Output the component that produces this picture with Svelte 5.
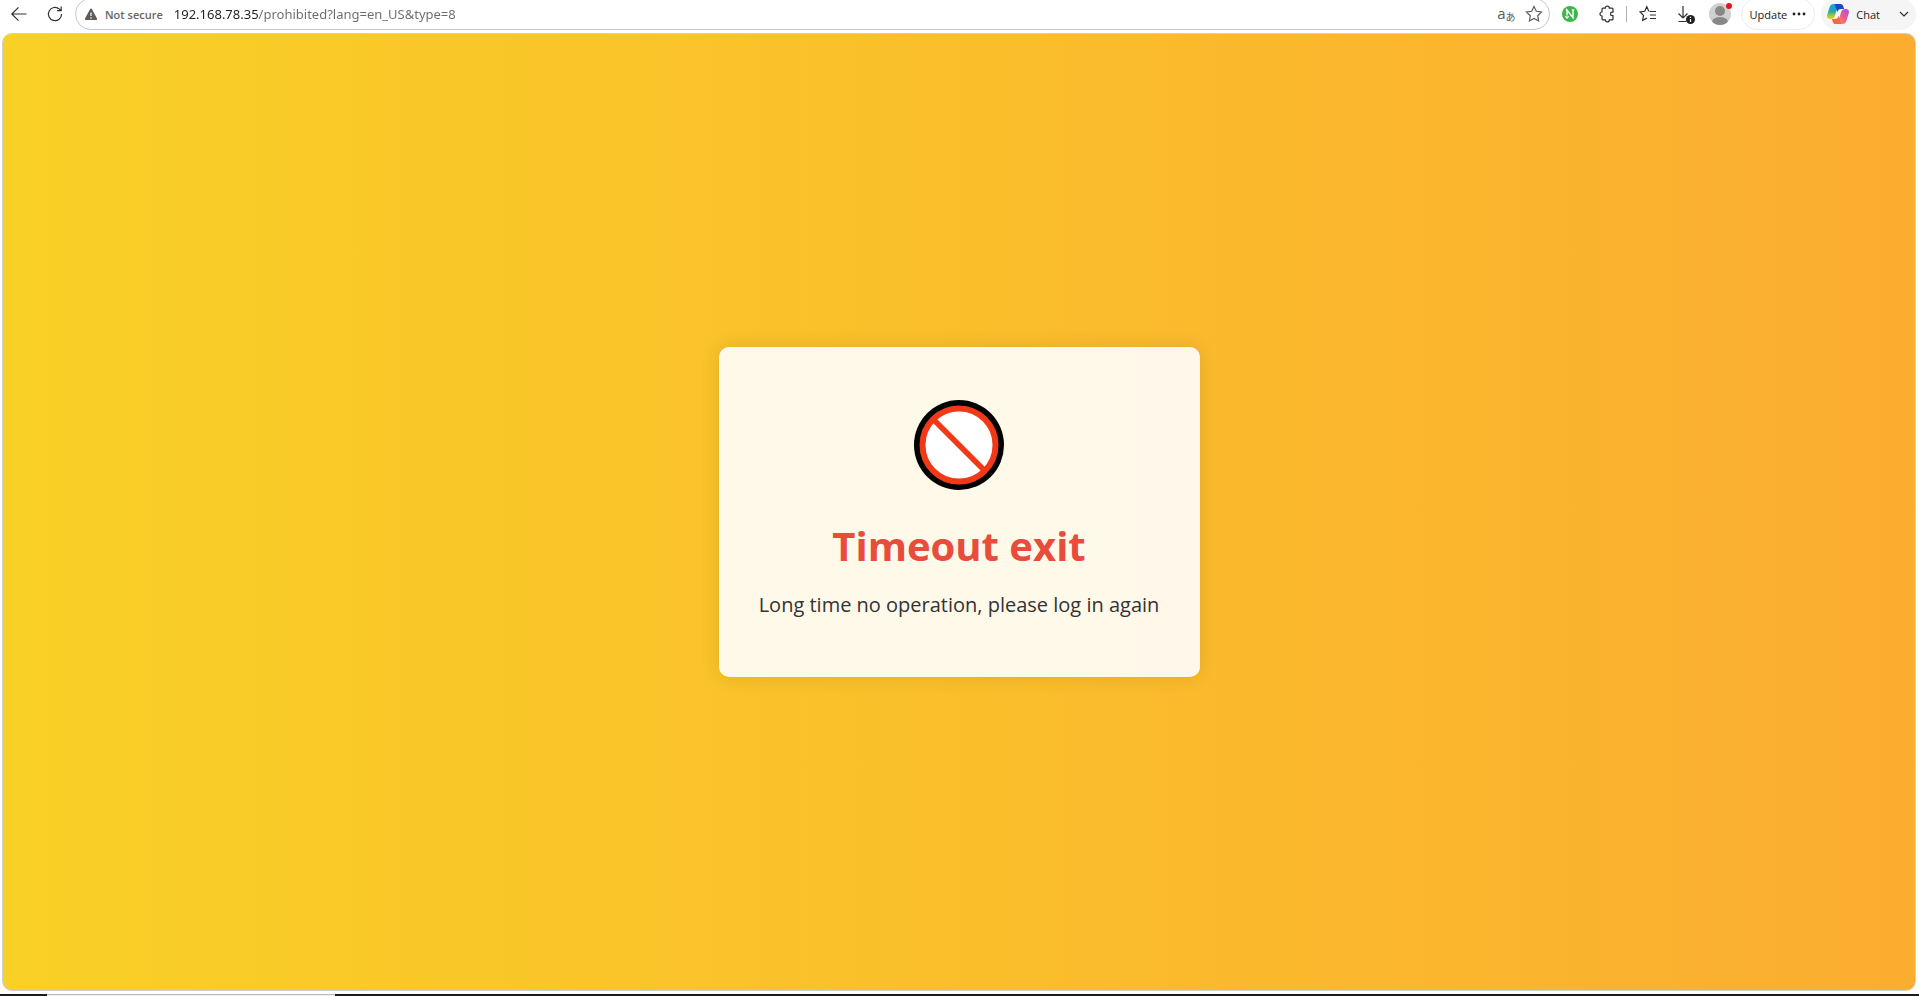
<script>
	let address = $state('192.168.78.35/prohibited?lang=en_US&type=8');

	const title = 'Timeout exit';
	const message = 'Long time no operation, please log in again';
</script>

<div class="browser">
	<header class="toolbar">
		<nav class="history">
			<button aria-label="Back">
				<svg width="18" height="18" viewBox="0 0 18 18">
					<path d="M16.500 9H1.800M8.500 2.300 1.800 9l6.700 6.700" />
				</svg>
			</button>
			<button aria-label="Refresh">
				<svg width="18" height="18" viewBox="0 0 18 18">
					<path d="M15.600 9a6.600 6.600 0 1 1-2.200-4.900L15 5.500M15.200 1.500v4.200h-4.200" />
				</svg>
			</button>
		</nav>

		<div class="address-bar">
			<button class="security">
				<svg width="14" height="13" viewBox="0 0 14 13">
					<path class="warning" d="M6 1.200a1.150 1.150 0 0 1 2 0l5 9.300a1.100 1.100 0 0 1-1 1.600H2a1.100 1.100 0 0 1-1-1.600z" />
					<path class="mark" d="M7 4.500v3.500M7 9.300v1.400" />
				</svg>
				<span>Not secure</span>
			</button>
			<input class="address" aria-label="Address" bind:value={address} spellcheck="false" />
			<button class="translate" aria-label="Translate">
				<span class="latin">a</span><span class="kana">あ</span>
			</button>
			<button class="grey" aria-label="Add to favorites">
				<svg width="18" height="18" viewBox="0 0 18 18">
					<path d="m9 1.500 2.300 4.800 5.200.7-3.800 3.700.9 5.300L9 13.500 4.400 16l.9-5.300L1.500 7l5.200-.7z" />
				</svg>
			</button>
		</div>

		<div class="tools">
			<button class="note" aria-label="Notes extension">
				<svg width="16" height="16" viewBox="0 0 16 16">
					<circle cx="8" cy="8" r="8" fill="#3db54a" stroke="none" />
					<path class="note-mark" d="M5 9.500V4l6 7.800V4M3.800 4H5.400M9.800 4h2.500M3.400 10.300 5 12l1.600-1.700" />
				</svg>
			</button>
			<button aria-label="Extensions">
				<svg width="18" height="18" viewBox="0 0 18 18">
					<path d="M5 3.200h2.300a2 2 0 0 1 4 0H14a1 1 0 0 1 1 1v3h-.8a1.700 1.700 0 0 0 0 3.400h.8v3.300a1 1 0 0 1-1 1h-2.700a2 2 0 0 1-4 0H5a1 1 0 0 1-1-1V11a2 2 0 0 1 0-4V4.200a1 1 0 0 1 1-1z" />
				</svg>
			</button>
			<span class="separator"></span>
			<button aria-label="Favorites">
				<svg width="18" height="18" viewBox="0 0 18 18">
					<path d="M9.800 6.200 7.800 1.800 5.700 6.300l-4.500.7 3.300 3.400-.8 4.900 4.200-2.200M10.500 6.500H17M11 10h6M11 13.500h6" />
				</svg>
			</button>
			<button class="downloads" aria-label="Downloads">
				<svg width="18" height="20" viewBox="0 0 18 20">
					<path d="M6 2v12M1.500 9.500 6 14l4.500-4.500M1.500 17.500h8" />
					<circle cx="13.500" cy="15.500" r="4.500" fill="#202020" stroke="none" />
					<path class="mark" d="M13.500 15v3M13.500 12.700v1.200" />
				</svg>
			</button>
			<button aria-label="Profile">
				<svg class="avatar" width="24" height="24" viewBox="0 0 24 24">
					<clipPath id="avatar-clip"><circle cx="12" cy="12" r="11" /></clipPath>
					<g clip-path="url(#avatar-clip)" stroke="none">
						<rect width="24" height="24" fill="#d2d0ce" />
						<circle cx="12" cy="9" r="5" fill="#8a8886" />
						<ellipse cx="12" cy="20" rx="8" ry="5" fill="#8a8886" />
					</g>
					<circle cx="21" cy="4" r="3" fill="#e81123" stroke="none" />
				</svg>
			</button>
			<button class="pill update">
				<span>Update</span>
				<svg width="14" height="4" viewBox="0 0 14 4">
					<g fill="#202020" stroke="none">
						<circle cx="2" cy="2" r="1.400" /><circle cx="7" cy="2" r="1.400" /><circle cx="12" cy="2" r="1.400" />
					</g>
				</svg>
			</button>
			<button class="pill chat">
				<svg width="22" height="22" viewBox="0 0 22 22">
					<defs>
						<linearGradient id="cool" x1="0" y1="0" x2="0" y2="1">
							<stop offset="0" stop-color="#149cf0" />
							<stop offset=".5" stop-color="#24a9a5" />
							<stop offset=".75" stop-color="#9cc63c" />
							<stop offset="1" stop-color="#f7cc17" />
						</linearGradient>
						<linearGradient id="warm" x1="1" y1="0" x2="0" y2="1">
							<stop offset="0" stop-color="#a653e8" />
							<stop offset=".5" stop-color="#f05c8d" />
							<stop offset="1" stop-color="#ffa04c" />
						</linearGradient>
					</defs>
					<g stroke="none">
						<path fill="url(#cool)" d="M7 1h7c-2 0-3 1.500-3.600 3.500L8 12.500C7.400 14.800 6 16 4 16H3c-2.500 0-3.500-2-2.700-4.500l2.200-7C3.200 2 4.500 1 7 1z" />
						<path fill="#1749c5" d="M7 1h6.500c1.700 0 2.300 1 2.800 2.600l.8 2.400H14c-2 0-3 1-3.600 3L9 5.500C8.300 3 8.500 1 7 1z" />
						<path fill="url(#warm)" d="M15 21H8c2 0 3-1.500 3.600-3.500L14 9.500c.6-2.300 2-3.500 4-3.500h1c2.500 0 3.500 2 2.700 4.500l-2.200 7C18.800 20 17.500 21 15 21z" />
						<path fill="#f26b3b" d="M15 21H8.500c-1.700 0-2.300-1-2.800-2.600L4.900 16H8c2 0 3-1 3.600-3l1.400 3.500c.7 2.500.5 4.500 2 4.500z" />
					</g>
				</svg>
				<span>Chat</span>
				<svg class="chevron" width="10" height="6" viewBox="0 0 10 6">
					<path d="m1 1 4 4 4-4" />
				</svg>
			</button>
		</div>
	</header>

	<main class="page">
		<section class="card">
			<svg class="prohibited" width="90" height="90" viewBox="0 0 90 90">
				<circle cx="45" cy="45" r="45" fill="#000" />
				<circle cx="45" cy="45" r="36.500" fill="#fff" stroke="#f03a17" stroke-width="6" />
				<path d="m20 20 50 50" stroke="#f03a17" stroke-width="5.500" />
			</svg>
			<h1>{title}</h1>
			<p>{message}</p>
		</section>
	</main>

	<footer class="taskbar">
		<span class="task"></span>
	</footer>
</div>

<style>
	:global(body) {
		margin: 0;
	}

	.browser {
		display: flex;
		flex-direction: column;
		min-height: 100vh;
		background: #fff;
		font-family: 'Open Sans', 'Noto Sans', 'Noto Sans CJK JP', sans-serif;
		overflow: hidden;
	}

	button {
		display: flex;
		align-items: center;
		justify-content: center;
		padding: 0;
		border: 0;
		background: none;
		font: inherit;
		color: #202020;
	}

	.toolbar {
		display: flex;
		align-items: center;
		height: 32px;
		margin-top: -2px;
		padding: 0 3px 3px 10px;
	}

	.toolbar svg {
		flex: none;
		fill: none;
		stroke: #303030;
		stroke-width: 1.2;
	}

	.history {
		display: flex;
		gap: 18px;
		margin-right: 11px;
	}

	.address-bar {
		box-sizing: border-box;
		flex: 1;
		display: flex;
		align-items: center;
		height: 32px;
		padding: 0 6px 0 8px;
		border: 1px solid #c8c8c8;
		border-radius: 16px;
	}

	.security {
		gap: 7px;
		margin-right: 11px;
		font-size: 11px;
		font-weight: 600;
		color: #6a6561;
	}

	.toolbar .warning {
		fill: #605c58;
		stroke: none;
	}

	.toolbar .mark {
		stroke: #fff;
	}

	.address {
		flex: 1;
		min-width: 0;
		padding: 0;
		border: 0;
		outline: 0;
		font-family: 'Noto Sans', sans-serif;
		font-size: 13px;
		/* host name dark, path grey */
		background: linear-gradient(90deg, #202020 85px, #6e6a67 85px);
		background-clip: text;
		color: transparent;
	}

	.translate {
		align-items: flex-start;
		margin-right: 9px;
		color: #605c58;
	}

	.latin {
		font-size: 15px;
		line-height: 18px;
	}

	.kana {
		padding-top: 5px;
		font-size: 10px;
		line-height: 16px;
	}

	.grey svg {
		stroke: #605c58;
	}

	.tools {
		display: flex;
		align-items: center;
	}

	.note {
		margin: 0 20px 0 12px;
	}

	.toolbar .note-mark {
		stroke: #fff;
		stroke-width: 1.4;
	}

	.separator {
		width: 1px;
		height: 16px;
		margin: 0 12px 0 10px;
		background: #b0b0b0;
	}

	.downloads {
		margin: 0 13px 0 20px;
	}

	.pill {
		box-sizing: border-box;
		height: 32px;
		border-radius: 16px;
		font-size: 11px;
	}

	.update {
		gap: 5px;
		margin: 0 6px 0 9px;
		padding: 0 8px;
		border: 1px solid #ececec;
	}

	.chat {
		gap: 7px;
		padding: 0 7px 0 6px;
		background: #f5f5f5;
	}

	.chevron {
		margin-left: 12px;
	}

	.page {
		flex: 1;
		display: flex;
		align-items: center;
		justify-content: center;
		margin: 0 3px 3px 2px;
		border: 1px solid #d0d0d0;
		border-radius: 10px;
		background: linear-gradient(90deg, #f9d026, #fbad30);
	}

	.card {
		box-sizing: border-box;
		display: flex;
		flex-direction: column;
		align-items: center;
		min-width: 481px;
		padding: 53px 40px 55px;
		border-radius: 10px;
		background: rgba(255, 255, 255, 0.9);
		box-shadow: 0 0 20px rgba(0, 0, 0, 0.1);
		text-align: center;
	}

	h1 {
		margin: 27px 0 13px;
		font-size: 40px;
		font-weight: 700;
		line-height: 58px;
		color: #e74c3c;
	}

	p {
		margin: 0;
		font-size: 20px;
		line-height: 34px;
		color: #333;
	}

	.taskbar {
		height: 2px;
		background: #1c1c1c;
	}

	.task {
		display: block;
		box-sizing: border-box;
		width: 15%;
		height: 2px;
		margin-left: 47px;
		border-top: 1px solid #b8b8b8;
		background: #f0f0f0;
	}
</style>
